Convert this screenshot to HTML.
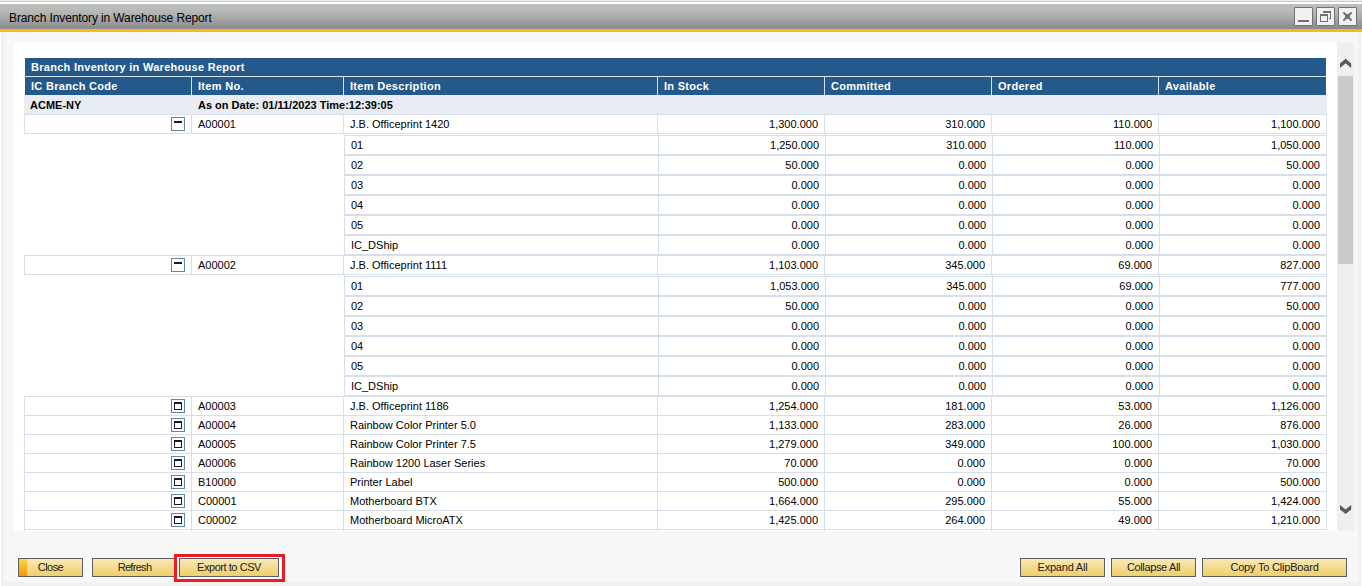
<!DOCTYPE html><html><head><meta charset="utf-8"><style>
*{margin:0;padding:0}
html,body{width:1362px;height:586px;overflow:hidden;background:#fff}
body div,body svg{position:absolute}
.t,.b,.hb,.title{white-space:nowrap;font-family:"Liberation Sans",sans-serif;line-height:18px;height:18px}
.t{font-size:11px;color:#000}
.b{font-size:11px;font-weight:bold;color:#000}
.hb{font-size:11px;font-weight:bold;color:#fff}
.title{font-size:12px;letter-spacing:-0.12px;color:#000;line-height:14px;height:14px}
.btn{border:1px solid #5b5b62;background:linear-gradient(#f8e9bb,#f4dc92 45%,#f0d06a 100%);box-shadow:0 0 0 1px #fff;font-family:"Liberation Sans",sans-serif;font-size:11px;color:#222;text-align:center;line-height:17px}
.btn span{position:relative}
.btn i{position:absolute;left:0;top:0;width:8px;height:17px;background:linear-gradient(#ffd43f,#f7950e)}
</style></head><body><div style="left:0px;top:0px;width:1362px;height:1px;background:#efefef;"></div>
<div style="left:0px;top:1px;width:1362px;height:1px;background:#c9c9c9;"></div>
<div style="left:0px;top:2px;width:1362px;height:2px;background:#ffffff;"></div>
<div style="left:0;top:4px;width:1362px;height:24px;background:linear-gradient(#bfc1bf,#b5b7b5 35%,#9c9d9c 75%,#8b8b8b)"></div>
<div style="left:0px;top:28px;width:1362px;height:1px;background:#898c91;"></div>
<div style="left:0px;top:29px;width:1362px;height:3px;background:#fdb913;"></div>
<div style="left:0px;top:32px;width:1362px;height:554px;background:#ffffff;"></div>
<div style="left:1px;top:32px;width:1360px;height:554px;background:#f1f1f1;"></div>
<div style="left:4px;top:32px;width:1354px;height:550px;background:#f7f7f7;"></div>
<div style="left:4px;top:32px;width:1354px;height:1px;background:#f4f6fb;"></div>
<div class="title" style="left:9px;top:11px;">Branch Inventory in Warehouse Report</div>
<div style="left:1294px;top:7px;width:17px;height:17px;border:1px solid #727272;border-radius:1px;background:#f1f1f1"></div>
<div style="left:1316px;top:7px;width:17px;height:17px;border:1px solid #727272;border-radius:1px;background:#f1f1f1"></div>
<div style="left:1338px;top:7px;width:17px;height:17px;border:1px solid #727272;border-radius:1px;background:#f1f1f1"></div>
<div style="left:1298px;top:20px;width:11px;height:2px;background:#707070;"></div>
<div style="left:1323px;top:11px;width:7px;height:6px;border-top:2px solid #707070;border-right:1px solid #707070"></div>
<div style="left:1329px;top:18px;width:1px;height:1px;background:#707070;"></div>
<div style="left:1320px;top:14px;width:6px;height:5px;border:1px solid #707070;border-top-width:2px;background:#f1f1f1"></div>
<svg style="position:absolute;left:1342px;top:11px" width="12" height="11" viewBox="0 0 12 11"><path d="M2 2 L9 9 M9 2 L2 9" stroke="#747474" stroke-width="2" stroke-linecap="round"/><rect x="3" y="3" width="5" height="5" fill="#747474"/></svg>
<div style="left:14px;top:42px;width:1323px;height:489px;background:#ffffff;"></div>
<div style="left:1337px;top:42px;width:17px;height:489px;background:#efefef;"></div>
<div style="left:1338px;top:76px;width:15px;height:188px;background:#cbcbcb;"></div>
<svg style="position:absolute;left:1332px;top:50px" width="30" height="30" viewBox="1332 50 30 30"><polygon points="1340,63.6 1345.6,58.8 1351.2,63.6 1351.2,68 1345.6,63.2 1340,68" fill="#5a5a5a"/></svg>
<svg style="position:absolute;left:1332px;top:495px" width="30" height="30" viewBox="1332 495 30 30"><polygon points="1340,505 1345.6,509.4 1351.2,505 1351.2,509.6 1345.6,514 1340,509.6" fill="#5a5a5a"/></svg>
<div style="left:0;top:0;width:1362px;height:531px;overflow:hidden">
<div style="left:25px;top:58px;width:1301px;height:18px;background:#24598c;"></div>
<div class="hb" style="left:31px;top:58px;letter-spacing:0.28px">Branch Inventory in Warehouse Report</div>
<div style="left:25px;top:76px;width:1301px;height:1px;background:#d9e1ea;"></div>
<div style="left:25px;top:77px;width:1301px;height:18px;background:#24598c;"></div>
<div class="hb" style="left:31px;top:77px;letter-spacing:0.3px">IC Branch Code</div>
<div style="left:191px;top:77px;width:1px;height:18px;background:#d9e1ea;"></div>
<div class="hb" style="left:198px;top:77px;letter-spacing:0.3px">Item No.</div>
<div style="left:343px;top:77px;width:1px;height:18px;background:#d9e1ea;"></div>
<div class="hb" style="left:350px;top:77px;letter-spacing:0.3px">Item Description</div>
<div style="left:657px;top:77px;width:1px;height:18px;background:#d9e1ea;"></div>
<div class="hb" style="left:664px;top:77px;letter-spacing:0.3px">In Stock</div>
<div style="left:824px;top:77px;width:1px;height:18px;background:#d9e1ea;"></div>
<div class="hb" style="left:831px;top:77px;letter-spacing:0.3px">Committed</div>
<div style="left:991px;top:77px;width:1px;height:18px;background:#d9e1ea;"></div>
<div class="hb" style="left:998px;top:77px;letter-spacing:0.3px">Ordered</div>
<div style="left:1158px;top:77px;width:1px;height:18px;background:#d9e1ea;"></div>
<div class="hb" style="left:1165px;top:77px;letter-spacing:0.3px">Available</div>
<div style="left:24px;top:95px;width:1303px;height:19px;background:#e8ecf3;"></div>
<div class="b" style="left:30px;top:96px;">ACME-NY</div>
<div class="b" style="left:198px;top:96px;">As on Date: 01/11/2023 Time:12:39:05</div>
<div style="left:24px;top:114px;width:1303px;height:1px;background:#d6dfea;"></div>
<div style="left:24px;top:115px;width:1px;height:19px;background:#d6dfea;"></div>
<div style="left:191px;top:115px;width:1px;height:19px;background:#d6dfea;"></div>
<div style="left:343px;top:115px;width:1px;height:19px;background:#d6dfea;"></div>
<div style="left:657px;top:115px;width:1px;height:19px;background:#d6dfea;"></div>
<div style="left:824px;top:115px;width:1px;height:19px;background:#d6dfea;"></div>
<div style="left:991px;top:115px;width:1px;height:19px;background:#d6dfea;"></div>
<div style="left:1158px;top:115px;width:1px;height:19px;background:#d6dfea;"></div>
<div style="left:1326px;top:115px;width:1px;height:19px;background:#d6dfea;"></div>
<div style="left:24px;top:133px;width:1302px;height:1px;background:#d6dfea;"></div>
<div style="left:171px;top:117px;width:12px;height:12px;border:1px solid #6286a3;background:#fff"></div>
<div style="left:174px;top:121px;width:8px;height:2px;background:#1b1733;"></div>
<div class="t" style="left:198px;top:115px;">A00001</div>
<div class="t" style="left:350px;top:115px;">J.B. Officeprint 1420</div>
<div class="t" style="right:544px;top:115px;text-align:right;">1,300.000</div>
<div class="t" style="right:377px;top:115px;text-align:right;">310.000</div>
<div class="t" style="right:210px;top:115px;text-align:right;">110.000</div>
<div class="t" style="right:42px;top:115px;text-align:right;">1,100.000</div>
<div style="left:345px;top:135px;width:982px;height:1px;background:#d6dfea;"></div>
<div style="left:345px;top:154px;width:982px;height:1px;background:#d6dfea;"></div>
<div class="t" style="left:351px;top:136px;">01</div>
<div class="t" style="right:543px;top:136px;text-align:right;">1,250.000</div>
<div class="t" style="right:376px;top:136px;text-align:right;">310.000</div>
<div class="t" style="right:209px;top:136px;text-align:right;">110.000</div>
<div class="t" style="right:42px;top:136px;text-align:right;">1,050.000</div>
<div style="left:345px;top:155px;width:982px;height:1px;background:#d6dfea;"></div>
<div style="left:345px;top:174px;width:982px;height:1px;background:#d6dfea;"></div>
<div class="t" style="left:351px;top:156px;">02</div>
<div class="t" style="right:543px;top:156px;text-align:right;">50.000</div>
<div class="t" style="right:376px;top:156px;text-align:right;">0.000</div>
<div class="t" style="right:209px;top:156px;text-align:right;">0.000</div>
<div class="t" style="right:42px;top:156px;text-align:right;">50.000</div>
<div style="left:345px;top:175px;width:982px;height:1px;background:#d6dfea;"></div>
<div style="left:345px;top:194px;width:982px;height:1px;background:#d6dfea;"></div>
<div class="t" style="left:351px;top:176px;">03</div>
<div class="t" style="right:543px;top:176px;text-align:right;">0.000</div>
<div class="t" style="right:376px;top:176px;text-align:right;">0.000</div>
<div class="t" style="right:209px;top:176px;text-align:right;">0.000</div>
<div class="t" style="right:42px;top:176px;text-align:right;">0.000</div>
<div style="left:345px;top:195px;width:982px;height:1px;background:#d6dfea;"></div>
<div style="left:345px;top:214px;width:982px;height:1px;background:#d6dfea;"></div>
<div class="t" style="left:351px;top:196px;">04</div>
<div class="t" style="right:543px;top:196px;text-align:right;">0.000</div>
<div class="t" style="right:376px;top:196px;text-align:right;">0.000</div>
<div class="t" style="right:209px;top:196px;text-align:right;">0.000</div>
<div class="t" style="right:42px;top:196px;text-align:right;">0.000</div>
<div style="left:345px;top:215px;width:982px;height:1px;background:#d6dfea;"></div>
<div style="left:345px;top:234px;width:982px;height:1px;background:#d6dfea;"></div>
<div class="t" style="left:351px;top:216px;">05</div>
<div class="t" style="right:543px;top:216px;text-align:right;">0.000</div>
<div class="t" style="right:376px;top:216px;text-align:right;">0.000</div>
<div class="t" style="right:209px;top:216px;text-align:right;">0.000</div>
<div class="t" style="right:42px;top:216px;text-align:right;">0.000</div>
<div style="left:345px;top:235px;width:982px;height:1px;background:#d6dfea;"></div>
<div style="left:345px;top:254px;width:982px;height:1px;background:#d6dfea;"></div>
<div class="t" style="left:351px;top:236px;">IC_DShip</div>
<div class="t" style="right:543px;top:236px;text-align:right;">0.000</div>
<div class="t" style="right:376px;top:236px;text-align:right;">0.000</div>
<div class="t" style="right:209px;top:236px;text-align:right;">0.000</div>
<div class="t" style="right:42px;top:236px;text-align:right;">0.000</div>
<div style="left:344px;top:134px;width:1px;height:121px;background:#d6dfea;"></div>
<div style="left:658px;top:134px;width:1px;height:121px;background:#d6dfea;"></div>
<div style="left:825px;top:134px;width:1px;height:121px;background:#d6dfea;"></div>
<div style="left:992px;top:134px;width:1px;height:121px;background:#d6dfea;"></div>
<div style="left:1159px;top:134px;width:1px;height:121px;background:#d6dfea;"></div>
<div style="left:1326px;top:134px;width:1px;height:121px;background:#d6dfea;"></div>
<div style="left:24px;top:255px;width:1303px;height:1px;background:#d6dfea;"></div>
<div style="left:24px;top:256px;width:1px;height:19px;background:#d6dfea;"></div>
<div style="left:191px;top:256px;width:1px;height:19px;background:#d6dfea;"></div>
<div style="left:343px;top:256px;width:1px;height:19px;background:#d6dfea;"></div>
<div style="left:657px;top:256px;width:1px;height:19px;background:#d6dfea;"></div>
<div style="left:824px;top:256px;width:1px;height:19px;background:#d6dfea;"></div>
<div style="left:991px;top:256px;width:1px;height:19px;background:#d6dfea;"></div>
<div style="left:1158px;top:256px;width:1px;height:19px;background:#d6dfea;"></div>
<div style="left:1326px;top:256px;width:1px;height:19px;background:#d6dfea;"></div>
<div style="left:24px;top:274px;width:1302px;height:1px;background:#d6dfea;"></div>
<div style="left:171px;top:258px;width:12px;height:12px;border:1px solid #6286a3;background:#fff"></div>
<div style="left:174px;top:262px;width:8px;height:2px;background:#1b1733;"></div>
<div class="t" style="left:198px;top:256px;">A00002</div>
<div class="t" style="left:350px;top:256px;">J.B. Officeprint 1111</div>
<div class="t" style="right:544px;top:256px;text-align:right;">1,103.000</div>
<div class="t" style="right:377px;top:256px;text-align:right;">345.000</div>
<div class="t" style="right:210px;top:256px;text-align:right;">69.000</div>
<div class="t" style="right:42px;top:256px;text-align:right;">827.000</div>
<div style="left:345px;top:276px;width:982px;height:1px;background:#d6dfea;"></div>
<div style="left:345px;top:295px;width:982px;height:1px;background:#d6dfea;"></div>
<div class="t" style="left:351px;top:277px;">01</div>
<div class="t" style="right:543px;top:277px;text-align:right;">1,053.000</div>
<div class="t" style="right:376px;top:277px;text-align:right;">345.000</div>
<div class="t" style="right:209px;top:277px;text-align:right;">69.000</div>
<div class="t" style="right:42px;top:277px;text-align:right;">777.000</div>
<div style="left:345px;top:296px;width:982px;height:1px;background:#d6dfea;"></div>
<div style="left:345px;top:315px;width:982px;height:1px;background:#d6dfea;"></div>
<div class="t" style="left:351px;top:297px;">02</div>
<div class="t" style="right:543px;top:297px;text-align:right;">50.000</div>
<div class="t" style="right:376px;top:297px;text-align:right;">0.000</div>
<div class="t" style="right:209px;top:297px;text-align:right;">0.000</div>
<div class="t" style="right:42px;top:297px;text-align:right;">50.000</div>
<div style="left:345px;top:316px;width:982px;height:1px;background:#d6dfea;"></div>
<div style="left:345px;top:335px;width:982px;height:1px;background:#d6dfea;"></div>
<div class="t" style="left:351px;top:317px;">03</div>
<div class="t" style="right:543px;top:317px;text-align:right;">0.000</div>
<div class="t" style="right:376px;top:317px;text-align:right;">0.000</div>
<div class="t" style="right:209px;top:317px;text-align:right;">0.000</div>
<div class="t" style="right:42px;top:317px;text-align:right;">0.000</div>
<div style="left:345px;top:336px;width:982px;height:1px;background:#d6dfea;"></div>
<div style="left:345px;top:355px;width:982px;height:1px;background:#d6dfea;"></div>
<div class="t" style="left:351px;top:337px;">04</div>
<div class="t" style="right:543px;top:337px;text-align:right;">0.000</div>
<div class="t" style="right:376px;top:337px;text-align:right;">0.000</div>
<div class="t" style="right:209px;top:337px;text-align:right;">0.000</div>
<div class="t" style="right:42px;top:337px;text-align:right;">0.000</div>
<div style="left:345px;top:356px;width:982px;height:1px;background:#d6dfea;"></div>
<div style="left:345px;top:375px;width:982px;height:1px;background:#d6dfea;"></div>
<div class="t" style="left:351px;top:357px;">05</div>
<div class="t" style="right:543px;top:357px;text-align:right;">0.000</div>
<div class="t" style="right:376px;top:357px;text-align:right;">0.000</div>
<div class="t" style="right:209px;top:357px;text-align:right;">0.000</div>
<div class="t" style="right:42px;top:357px;text-align:right;">0.000</div>
<div style="left:345px;top:376px;width:982px;height:1px;background:#d6dfea;"></div>
<div style="left:345px;top:395px;width:982px;height:1px;background:#d6dfea;"></div>
<div class="t" style="left:351px;top:377px;">IC_DShip</div>
<div class="t" style="right:543px;top:377px;text-align:right;">0.000</div>
<div class="t" style="right:376px;top:377px;text-align:right;">0.000</div>
<div class="t" style="right:209px;top:377px;text-align:right;">0.000</div>
<div class="t" style="right:42px;top:377px;text-align:right;">0.000</div>
<div style="left:344px;top:275px;width:1px;height:121px;background:#d6dfea;"></div>
<div style="left:658px;top:275px;width:1px;height:121px;background:#d6dfea;"></div>
<div style="left:825px;top:275px;width:1px;height:121px;background:#d6dfea;"></div>
<div style="left:992px;top:275px;width:1px;height:121px;background:#d6dfea;"></div>
<div style="left:1159px;top:275px;width:1px;height:121px;background:#d6dfea;"></div>
<div style="left:1326px;top:275px;width:1px;height:121px;background:#d6dfea;"></div>
<div style="left:24px;top:396px;width:1303px;height:1px;background:#d6dfea;"></div>
<div style="left:24px;top:397px;width:1px;height:19px;background:#d6dfea;"></div>
<div style="left:191px;top:397px;width:1px;height:19px;background:#d6dfea;"></div>
<div style="left:343px;top:397px;width:1px;height:19px;background:#d6dfea;"></div>
<div style="left:657px;top:397px;width:1px;height:19px;background:#d6dfea;"></div>
<div style="left:824px;top:397px;width:1px;height:19px;background:#d6dfea;"></div>
<div style="left:991px;top:397px;width:1px;height:19px;background:#d6dfea;"></div>
<div style="left:1158px;top:397px;width:1px;height:19px;background:#d6dfea;"></div>
<div style="left:1326px;top:397px;width:1px;height:19px;background:#d6dfea;"></div>
<div style="left:24px;top:415px;width:1302px;height:1px;background:#d6dfea;"></div>
<div style="left:171px;top:399px;width:12px;height:12px;border:1px solid #6286a3;background:#fff"></div>
<div style="left:174px;top:402px;width:6px;height:5px;border:1px solid #1b1733;border-top-width:2px"></div>
<div class="t" style="left:198px;top:397px;">A00003</div>
<div class="t" style="left:350px;top:397px;">J.B. Officeprint 1186</div>
<div class="t" style="right:544px;top:397px;text-align:right;">1,254.000</div>
<div class="t" style="right:377px;top:397px;text-align:right;">181.000</div>
<div class="t" style="right:210px;top:397px;text-align:right;">53.000</div>
<div class="t" style="right:42px;top:397px;text-align:right;">1,126.000</div>
<div style="left:24px;top:416px;width:1px;height:19px;background:#d6dfea;"></div>
<div style="left:191px;top:416px;width:1px;height:19px;background:#d6dfea;"></div>
<div style="left:343px;top:416px;width:1px;height:19px;background:#d6dfea;"></div>
<div style="left:657px;top:416px;width:1px;height:19px;background:#d6dfea;"></div>
<div style="left:824px;top:416px;width:1px;height:19px;background:#d6dfea;"></div>
<div style="left:991px;top:416px;width:1px;height:19px;background:#d6dfea;"></div>
<div style="left:1158px;top:416px;width:1px;height:19px;background:#d6dfea;"></div>
<div style="left:1326px;top:416px;width:1px;height:19px;background:#d6dfea;"></div>
<div style="left:24px;top:434px;width:1302px;height:1px;background:#d6dfea;"></div>
<div style="left:171px;top:418px;width:12px;height:12px;border:1px solid #6286a3;background:#fff"></div>
<div style="left:174px;top:421px;width:6px;height:5px;border:1px solid #1b1733;border-top-width:2px"></div>
<div class="t" style="left:198px;top:416px;">A00004</div>
<div class="t" style="left:350px;top:416px;">Rainbow Color Printer 5.0</div>
<div class="t" style="right:544px;top:416px;text-align:right;">1,133.000</div>
<div class="t" style="right:377px;top:416px;text-align:right;">283.000</div>
<div class="t" style="right:210px;top:416px;text-align:right;">26.000</div>
<div class="t" style="right:42px;top:416px;text-align:right;">876.000</div>
<div style="left:24px;top:435px;width:1px;height:19px;background:#d6dfea;"></div>
<div style="left:191px;top:435px;width:1px;height:19px;background:#d6dfea;"></div>
<div style="left:343px;top:435px;width:1px;height:19px;background:#d6dfea;"></div>
<div style="left:657px;top:435px;width:1px;height:19px;background:#d6dfea;"></div>
<div style="left:824px;top:435px;width:1px;height:19px;background:#d6dfea;"></div>
<div style="left:991px;top:435px;width:1px;height:19px;background:#d6dfea;"></div>
<div style="left:1158px;top:435px;width:1px;height:19px;background:#d6dfea;"></div>
<div style="left:1326px;top:435px;width:1px;height:19px;background:#d6dfea;"></div>
<div style="left:24px;top:453px;width:1302px;height:1px;background:#d6dfea;"></div>
<div style="left:171px;top:437px;width:12px;height:12px;border:1px solid #6286a3;background:#fff"></div>
<div style="left:174px;top:440px;width:6px;height:5px;border:1px solid #1b1733;border-top-width:2px"></div>
<div class="t" style="left:198px;top:435px;">A00005</div>
<div class="t" style="left:350px;top:435px;">Rainbow Color Printer 7.5</div>
<div class="t" style="right:544px;top:435px;text-align:right;">1,279.000</div>
<div class="t" style="right:377px;top:435px;text-align:right;">349.000</div>
<div class="t" style="right:210px;top:435px;text-align:right;">100.000</div>
<div class="t" style="right:42px;top:435px;text-align:right;">1,030.000</div>
<div style="left:24px;top:454px;width:1px;height:19px;background:#d6dfea;"></div>
<div style="left:191px;top:454px;width:1px;height:19px;background:#d6dfea;"></div>
<div style="left:343px;top:454px;width:1px;height:19px;background:#d6dfea;"></div>
<div style="left:657px;top:454px;width:1px;height:19px;background:#d6dfea;"></div>
<div style="left:824px;top:454px;width:1px;height:19px;background:#d6dfea;"></div>
<div style="left:991px;top:454px;width:1px;height:19px;background:#d6dfea;"></div>
<div style="left:1158px;top:454px;width:1px;height:19px;background:#d6dfea;"></div>
<div style="left:1326px;top:454px;width:1px;height:19px;background:#d6dfea;"></div>
<div style="left:24px;top:472px;width:1302px;height:1px;background:#d6dfea;"></div>
<div style="left:171px;top:456px;width:12px;height:12px;border:1px solid #6286a3;background:#fff"></div>
<div style="left:174px;top:459px;width:6px;height:5px;border:1px solid #1b1733;border-top-width:2px"></div>
<div class="t" style="left:198px;top:454px;">A00006</div>
<div class="t" style="left:350px;top:454px;">Rainbow 1200 Laser Series</div>
<div class="t" style="right:544px;top:454px;text-align:right;">70.000</div>
<div class="t" style="right:377px;top:454px;text-align:right;">0.000</div>
<div class="t" style="right:210px;top:454px;text-align:right;">0.000</div>
<div class="t" style="right:42px;top:454px;text-align:right;">70.000</div>
<div style="left:24px;top:473px;width:1px;height:19px;background:#d6dfea;"></div>
<div style="left:191px;top:473px;width:1px;height:19px;background:#d6dfea;"></div>
<div style="left:343px;top:473px;width:1px;height:19px;background:#d6dfea;"></div>
<div style="left:657px;top:473px;width:1px;height:19px;background:#d6dfea;"></div>
<div style="left:824px;top:473px;width:1px;height:19px;background:#d6dfea;"></div>
<div style="left:991px;top:473px;width:1px;height:19px;background:#d6dfea;"></div>
<div style="left:1158px;top:473px;width:1px;height:19px;background:#d6dfea;"></div>
<div style="left:1326px;top:473px;width:1px;height:19px;background:#d6dfea;"></div>
<div style="left:24px;top:491px;width:1302px;height:1px;background:#d6dfea;"></div>
<div style="left:171px;top:475px;width:12px;height:12px;border:1px solid #6286a3;background:#fff"></div>
<div style="left:174px;top:478px;width:6px;height:5px;border:1px solid #1b1733;border-top-width:2px"></div>
<div class="t" style="left:198px;top:473px;">B10000</div>
<div class="t" style="left:350px;top:473px;">Printer Label</div>
<div class="t" style="right:544px;top:473px;text-align:right;">500.000</div>
<div class="t" style="right:377px;top:473px;text-align:right;">0.000</div>
<div class="t" style="right:210px;top:473px;text-align:right;">0.000</div>
<div class="t" style="right:42px;top:473px;text-align:right;">500.000</div>
<div style="left:24px;top:492px;width:1px;height:19px;background:#d6dfea;"></div>
<div style="left:191px;top:492px;width:1px;height:19px;background:#d6dfea;"></div>
<div style="left:343px;top:492px;width:1px;height:19px;background:#d6dfea;"></div>
<div style="left:657px;top:492px;width:1px;height:19px;background:#d6dfea;"></div>
<div style="left:824px;top:492px;width:1px;height:19px;background:#d6dfea;"></div>
<div style="left:991px;top:492px;width:1px;height:19px;background:#d6dfea;"></div>
<div style="left:1158px;top:492px;width:1px;height:19px;background:#d6dfea;"></div>
<div style="left:1326px;top:492px;width:1px;height:19px;background:#d6dfea;"></div>
<div style="left:24px;top:510px;width:1302px;height:1px;background:#d6dfea;"></div>
<div style="left:171px;top:494px;width:12px;height:12px;border:1px solid #6286a3;background:#fff"></div>
<div style="left:174px;top:497px;width:6px;height:5px;border:1px solid #1b1733;border-top-width:2px"></div>
<div class="t" style="left:198px;top:492px;">C00001</div>
<div class="t" style="left:350px;top:492px;">Motherboard BTX</div>
<div class="t" style="right:544px;top:492px;text-align:right;">1,664.000</div>
<div class="t" style="right:377px;top:492px;text-align:right;">295.000</div>
<div class="t" style="right:210px;top:492px;text-align:right;">55.000</div>
<div class="t" style="right:42px;top:492px;text-align:right;">1,424.000</div>
<div style="left:24px;top:511px;width:1px;height:19px;background:#d6dfea;"></div>
<div style="left:191px;top:511px;width:1px;height:19px;background:#d6dfea;"></div>
<div style="left:343px;top:511px;width:1px;height:19px;background:#d6dfea;"></div>
<div style="left:657px;top:511px;width:1px;height:19px;background:#d6dfea;"></div>
<div style="left:824px;top:511px;width:1px;height:19px;background:#d6dfea;"></div>
<div style="left:991px;top:511px;width:1px;height:19px;background:#d6dfea;"></div>
<div style="left:1158px;top:511px;width:1px;height:19px;background:#d6dfea;"></div>
<div style="left:1326px;top:511px;width:1px;height:19px;background:#d6dfea;"></div>
<div style="left:24px;top:529px;width:1302px;height:1px;background:#d6dfea;"></div>
<div style="left:171px;top:513px;width:12px;height:12px;border:1px solid #6286a3;background:#fff"></div>
<div style="left:174px;top:516px;width:6px;height:5px;border:1px solid #1b1733;border-top-width:2px"></div>
<div class="t" style="left:198px;top:511px;">C00002</div>
<div class="t" style="left:350px;top:511px;">Motherboard MicroATX</div>
<div class="t" style="right:544px;top:511px;text-align:right;">1,425.000</div>
<div class="t" style="right:377px;top:511px;text-align:right;">264.000</div>
<div class="t" style="right:210px;top:511px;text-align:right;">49.000</div>
<div class="t" style="right:42px;top:511px;text-align:right;">1,210.000</div>
<div style="left:24px;top:530px;width:1px;height:1px;background:#d6dfea;"></div>
<div style="left:191px;top:530px;width:1px;height:1px;background:#d6dfea;"></div>
<div style="left:343px;top:530px;width:1px;height:1px;background:#d6dfea;"></div>
<div style="left:657px;top:530px;width:1px;height:1px;background:#d6dfea;"></div>
<div style="left:824px;top:530px;width:1px;height:1px;background:#d6dfea;"></div>
<div style="left:991px;top:530px;width:1px;height:1px;background:#d6dfea;"></div>
<div style="left:1158px;top:530px;width:1px;height:1px;background:#d6dfea;"></div>
<div style="left:1326px;top:530px;width:1px;height:1px;background:#d6dfea;"></div>
</div>
<div class="btn" style="left:18px;top:558px;width:63px;height:17px;letter-spacing:-0.55px"><i></i><span>Close</span></div>
<div class="btn" style="left:92px;top:558px;width:83px;height:17px;letter-spacing:-0.7px"><span>Refresh</span></div>
<div style="left:174px;top:554px;width:105px;height:22px;border:3px solid #ec1c24;background:#fff"></div>
<div class="btn" style="left:179px;top:558px;width:98px;height:17px;letter-spacing:-0.45px"><span>Export to CSV</span></div>
<div class="btn" style="left:1020px;top:558px;width:83px;height:17px;letter-spacing:-0.2px"><span>Expand All</span></div>
<div class="btn" style="left:1111px;top:558px;width:83px;height:17px;letter-spacing:-0.36px"><span>Collapse All</span></div>
<div class="btn" style="left:1202px;top:558px;width:143px;height:17px;letter-spacing:-0.2px"><span>Copy To ClipBoard</span></div></body></html>
